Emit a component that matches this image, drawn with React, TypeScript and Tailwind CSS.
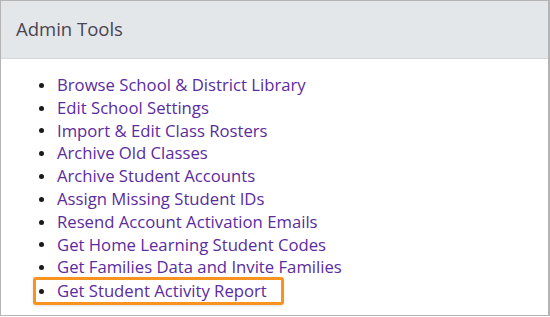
import React from "react";

const tools = [
  "Browse School & District Library",
  "Edit School Settings",
  "Import & Edit Class Rosters",
  "Archive Old Classes",
  "Archive Student Accounts",
  "Assign Missing Student IDs",
  "Resend Account Activation Emails",
  "Get Home Learning Student Codes",
  "Get Families Data and Invite Families",
];

const App = () => {
  return (
    <div className="w-[550px] h-[317px] bg-white font-['Open_Sans',sans-serif]">
      <div className="h-[316px] border-t border-l border-r-2 border-b border-[#b4b4b4] flex flex-col">
        <div className="h-[58px] shrink-0 bg-[#e4e7ea] border-b border-[#d6d8db] flex items-center px-[15px]">
          <h2 className="text-[18.5px] font-medium text-[#4a4453] -mt-[2px]">Admin Tools</h2>
        </div>
        <ul className="pt-[15px] pl-[32px] flex flex-col">
          {tools.map(t => (
            <li key={t} className="flex items-center shrink-0 h-[22.8px] pl-[3px]">
              <span className="w-[5px] h-[5px] rounded-full bg-[#1a1a1a] mr-[13px] ml-[3px]" />
              <a href="#" className="text-[16.7px] text-[#5b2ba0] leading-none whitespace-nowrap">{t}</a>
            </li>
          ))}
          <li className="flex items-center shrink-0 h-[28px] w-[251px] border-[3px] border-[#f7931e] rounded-[3px] shadow-sm mt-[-2px]">
            <span className="w-[5px] h-[5px] rounded-full bg-[#1a1a1a] mr-[13px] ml-[3px]" />
            <a href="#" className="text-[16.7px] text-[#5b2ba0] leading-none whitespace-nowrap">Get Student Activity Report</a>
          </li>
        </ul>
      </div>
    </div>
  );
};

export default App;
